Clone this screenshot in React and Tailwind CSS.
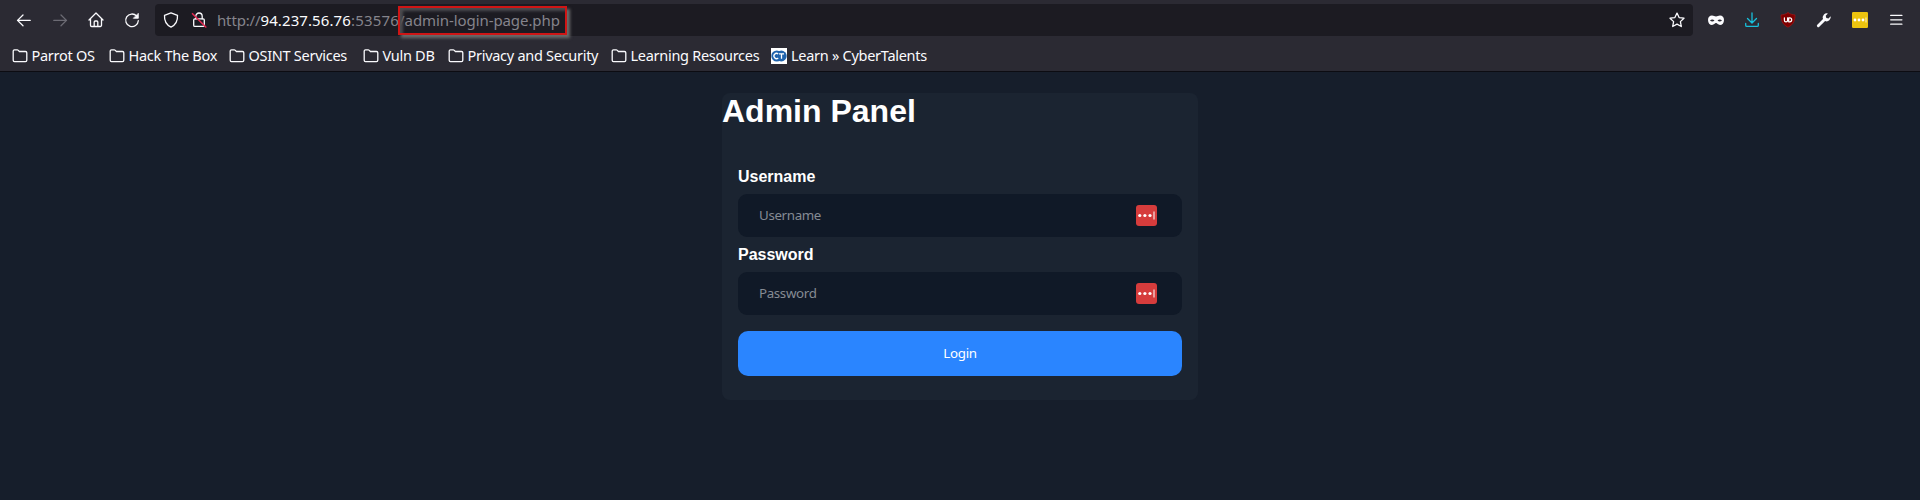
import React from "react";

const bookmarks = [
  { label: "Parrot OS", width: "w-[97px]" },
  { label: "Hack The Box", width: "w-[120px]" },
  { label: "OSINT Services", width: "w-[134px]" },
  { label: "Vuln DB", width: "w-[85px]" },
  { label: "Privacy and Security", width: "w-[163px]" },
  { label: "Learning Resources", width: "w-[159px]" },
];

function Icon({ className = "", children }) {
  return (
    <svg
      viewBox="0 0 16 16"
      className={`size-4 shrink-0 ${className}`}
      fill="none"
      stroke="currentColor"
      strokeWidth="1.3"
      strokeLinecap="round"
      strokeLinejoin="round"
    >
      {children}
    </svg>
  );
}

function Folder() {
  return (
    <Icon className="mr-[3.5px]">
      <path d="M1.2 12.3V3.2a1.3 1.3 0 0 1 1.3-1.3h2.7c.5 0 .8.2 1.1.5l1.1 1.1h6.1a1.3 1.3 0 0 1 1.3 1.3v7.5a1.3 1.3 0 0 1-1.3 1.3h-11a1.3 1.3 0 0 1-1.3-1.3z" />
    </Icon>
  );
}

function Toolbar() {
  return (
    <div className="flex h-10 shrink-0 items-center">
      <div className="flex w-[155px] shrink-0 items-center gap-5 pl-4">
        <Icon>
          <path d="M14.2 8.4H1.5M7 3 1.5 8.4 7 13.8" />
        </Icon>
        <Icon className="text-[#6c6b74]">
          <path d="M1.8 8.4h12.7M9 3l5.500 5.400L9 13.800" />
        </Icon>
        <Icon>
          <path d="M1 8 8 1l7 7M2.500 6.800v6.500A1.200 1.200 0 0 0 3.700 14.500h8.600a1.200 1.200 0 0 0 1.200-1.200V6.800M6.200 14.300V10a1 1 0 0 1 1-1h1.600a1 1 0 0 1 1 1v4.300" />
        </Icon>
        <Icon>
          <path d="M14.300 8.700A6.300 6.300 0 1 1 12.600 4" />
          <path d="M14.300 1.700v4.600H9.700z" fill="currentColor" strokeWidth="0.8" />
        </Icon>
      </div>
      <div className="flex h-8 w-[1538px] shrink-0 items-center rounded bg-[#1c1b22] pr-2 pl-2">
        <Icon>
          <path d="M8 .9 14.500 3.300c.3 4.800-1.200 9.300-6.500 11.800C2.700 12.600 1.200 8.100 1.500 3.300z" />
        </Icon>
        <Icon className="ml-3">
          <path d="M4.800 6.800V4.200a3.200 3.200 0 0 1 6.400 0v2.600" />
          <rect x="2.700" y="6.800" width="10.600" height="7.600" rx="1.200" />
          <path d="M1.500 1.700 14.800 15" className="stroke-[#e22850]" strokeWidth="1.600" />
        </Icon>
        <div className="relative ml-[10px] text-[15px] leading-5 whitespace-nowrap text-[#85848c]">
          <span className="tracking-[-0.15px]">http://</span>
          <span className="tracking-[0.1px] text-[#fbfbfe]">94.237.56.76</span>
          <span className="tracking-[0.2px]">:53576</span>
          <span className="tracking-[-0.08px]">/admin-login-page.php</span>
          <div className="absolute -top-1 left-[181px] h-[29px] w-[169px] border-2 border-[#cf1515] shadow-[3px_3px_3px_#6c6c6c,inset_3px_3px_3px_#4b4b4f]" />
        </div>
        <Icon className="ml-auto">
          <path d="m8 1.100 2.100 4.500 4.900.6-3.600 3.400.9 4.900L8 12.100l-4.300 2.400.9-4.900L1 6.200l4.900-.6z" />
        </Icon>
      </div>
      <div className="flex items-center gap-5 pl-[15px]">
        <Icon>
          <path
            d="M4 3.600c1.700 0 2.600.8 4 .8s2.300-.8 4-.8c2.400 0 4 1.700 4 4.300 0 3-1.700 5-4 5-2 0-2.800-1.800-4-1.800s-2 1.800-4 1.800c-2.300 0-4-2-4-5 0-2.600 1.600-4.300 4-4.300zM2 8.500c1.400 1.300 3.200 1.300 4.500 0C5.100 7 3.300 7 2 8.500zm7.500 0c1.300 1.300 3.100 1.300 4.500 0-1.300-1.500-3.100-1.500-4.500 0z"
            fill="currentColor"
            fillRule="evenodd"
            stroke="none"
          />
        </Icon>
        <Icon className="text-[#18c0dc]">
          <path d="M8 1v9.800M3.500 6.500 8 11l4.500-4.500M1.700 11.500v1.700c0 .7.500 1.200 1.200 1.200h10.200c.7 0 1.200-.5 1.200-1.200v-1.700" />
        </Icon>
        <Icon>
          <path
            d="M8 .8c2.200 1.400 4.500 1.900 7 2.100 0 5-.8 9.200-7 12.300C1.800 12.100 1 7.900 1 2.900 3.500 2.700 5.800 2.200 8 .8z"
            className="fill-[#800000] stroke-[#a01717]"
            strokeWidth="0.7"
          />
          <path d="M4.400 5.800v2.400a1.600 1.600 0 0 0 3.200 0V5.800M8.700 5.800h1a2 2 0 0 1 0 4h-1z" className="stroke-white" strokeWidth="1.200" />
        </Icon>
        <Icon>
          <path
            d="M14.700 4.300 12.500 6.500 10.300 5.900 9.700 3.700l2.200-2.200A4.200 4.200 0 0 0 7 7.100L1.300 12.700a1.400 1.400 0 0 0 2 2L9.100 9.100a4.200 4.200 0 0 0 5.600-4.800z"
            fill="currentColor"
            stroke="none"
          />
        </Icon>
        <Icon>
          <rect width="16" height="16" rx="1.200" className="fill-[#edc40f]" stroke="none" />
          <g className="fill-white" stroke="none">
            <circle cx="3" cy="8" r="1.400" />
            <circle cx="7" cy="8" r="1.400" />
            <circle cx="11" cy="8" r="1.400" />
            <rect x="13.600" y="5.500" width="0.800" height="5" />
          </g>
        </Icon>
        <Icon>
          <path d="M2.700 3.400h11.200M2.700 7.800h11.200M2.700 12.200h11.200" />
        </Icon>
      </div>
    </div>
  );
}

function Bookmarks() {
  return (
    <nav className="flex h-[31px] items-center pl-3 text-[14.5px] leading-5 tracking-[-0.28px] whitespace-nowrap">
      {bookmarks.map((item) => (
        <a key={item.label} className={`flex shrink-0 items-center ${item.width}`}>
          <Folder />
          <span className="pb-[2px]">{item.label}</span>
        </a>
      ))}
      <a className="ml-px flex items-center">
        <svg viewBox="0 0 16 16" className="mr-1 size-4 shrink-0">
          <rect width="16" height="16" fill="#fff" />
          <circle cx="5.800" cy="8" r="5.500" fill="#1f63ad" />
          <circle cx="10.300" cy="8" r="5.400" fill="#1f63ad" />
          <path d="M7.200 6A2.600 2.600 0 1 0 7.200 10M8 5.800h5M10.500 5.800v5" fill="none" stroke="#fff" strokeWidth="1.300" />
        </svg>
        <span className="pb-[2px]">Learn » CyberTalents</span>
      </a>
    </nav>
  );
}

function Field({ label }) {
  return (
    <label className="flex flex-col">
      <span className="h-[25px] font-['Liberation_Sans',sans-serif] text-base leading-4 font-bold text-white">
        {label}
      </span>
      <span className="flex h-[43px] items-center justify-between rounded-[9px] bg-[#101927] pr-[25px] pl-[21px] text-[13.33px] tracking-[-0.35px] text-[#858b94]">
        <span className="pt-px">{label}</span>
        <svg viewBox="0 0 21 21" className="mb-px size-[21px]">
          <rect width="21" height="21" rx="3" fill="#d63c3c" />
          <g fill="#fff">
            <circle cx="3.800" cy="10.500" r="1.600" />
            <circle cx="8.900" cy="10.500" r="1.600" />
            <circle cx="14" cy="10.500" r="1.600" />
            <rect x="17.500" y="6.500" width="1" height="8" />
          </g>
        </svg>
      </span>
    </label>
  );
}

export default function App() {
  return (
    <div className="flex h-[500px] w-[1920px] flex-col overflow-hidden bg-[#161e2b] font-['Noto_Sans',sans-serif]">
      <header className="flex h-[72px] shrink-0 flex-col border-b border-[#0c0c12] bg-[#2b2a33] text-[#fbfbfe]">
        <Toolbar />
        <Bookmarks />
      </header>
      <main className="mt-[21px] ml-[722px] flex h-[307px] w-[476px] flex-col rounded-lg bg-[#1b2431]">
        <h1 className="h-[76px] font-['Liberation_Sans',sans-serif] text-[32px] leading-9 font-bold text-white">
          Admin Panel
        </h1>
        <form className="flex flex-col px-4">
          <Field label="Username" />
          <div className="h-[10px]" />
          <Field label="Password" />
          <button
            type="button"
            className="mt-4 h-[45px] rounded-[10px] bg-[#2a85ff] text-[13.33px] tracking-[-0.25px] text-white"
          >
            Login
          </button>
        </form>
      </main>
    </div>
  );
}
